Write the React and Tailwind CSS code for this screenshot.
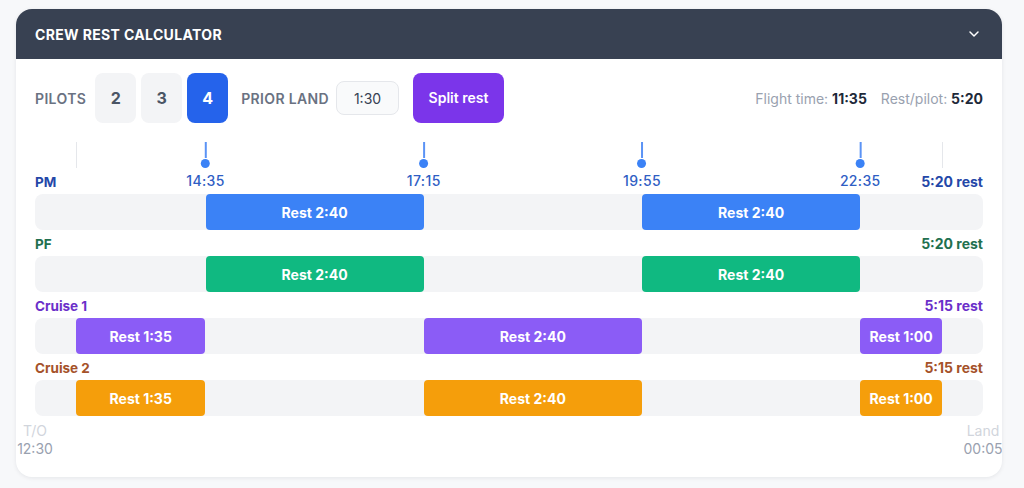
import React, { useState } from "react";
import { ChevronDown } from "lucide-react";

const START = 12 * 60 + 30; // T/O 12:30
const TOTAL = 695; // 11:35

const pct = (min) => `${(min / TOTAL) * 100}%`;

const toMin = (t) => {
  const [h, m] = t.split(":").map(Number);
  let v = h * 60 + m - START;
  if (v < 0) v += 24 * 60;
  return v;
};

const rows = [
  {
    name: "PM",
    total: "5:20 rest",
    label: "text-[#2447a8]",
    bar: "bg-[#3b82f6]",
    rests: [
      ["14:35", "17:15", "Rest 2:40"],
      ["19:55", "22:35", "Rest 2:40"],
    ],
  },
  {
    name: "PF",
    total: "5:20 rest",
    label: "text-[#22704f]",
    bar: "bg-[#10b981]",
    rests: [
      ["14:35", "17:15", "Rest 2:40"],
      ["19:55", "22:35", "Rest 2:40"],
    ],
  },
  {
    name: "Cruise 1",
    total: "5:15 rest",
    label: "text-[#6b2fc9]",
    bar: "bg-[#8b5cf6]",
    rests: [
      ["13:00", "14:35", "Rest 1:35"],
      ["17:15", "19:55", "Rest 2:40"],
      ["22:35", "23:35", "Rest 1:00"],
    ],
  },
  {
    name: "Cruise 2",
    total: "5:15 rest",
    label: "text-[#a5522a]",
    bar: "bg-[#f59e0b]",
    rests: [
      ["13:00", "14:35", "Rest 1:35"],
      ["17:15", "19:55", "Rest 2:40"],
      ["22:35", "23:35", "Rest 1:00"],
    ],
  },
];

const swaps = ["14:35", "17:15", "19:55", "22:35"];

export default function App() {
  const [pilots, setPilots] = useState(4);
  const [prior, setPrior] = useState("1:30");

  return (
    <div
      className="min-h-screen bg-[#f7f8fa] pt-[9px] pl-4"
      style={{ fontFamily: "Inter, 'Liberation Sans', sans-serif" }}
    >
      <div className="w-[986px] rounded-2xl bg-white shadow-[0_1px_4px_rgba(15,23,42,0.08)] overflow-hidden">
        {/* Header */}
        <div className="h-[50px] bg-[#384152] px-[19px] flex items-center justify-between">
          <h2 className="text-[14px] font-bold tracking-wide text-white">CREW REST CALCULATOR</h2>
          <ChevronDown size={16} strokeWidth={2.2} className="text-white mr-[1px]" />
        </div>

        <div className="px-[19px] pt-[14px] pb-[19px]">
          {/* Controls */}
          <div className="flex items-center h-[50px]">
            <span className="text-[14px] font-semibold tracking-wide text-gray-500 mr-[9px]">PILOTS</span>
            <div className="flex gap-[5px]">
              {[2, 3, 4].map((n) => (
                <button
                  key={n}
                  onClick={() => setPilots(n)}
                  className={
                    n === pilots
                      ? "w-[41px] h-[50px] rounded-lg bg-[#2563eb] text-white text-base font-bold"
                      : "w-[41px] h-[50px] rounded-lg bg-gray-100 text-gray-600 text-base font-bold"
                  }
                >
                  {n}
                </button>
              ))}
            </div>
            <span className="ml-[13px] mr-[7px] text-[14px] font-semibold tracking-wide text-gray-500">PRIOR LAND</span>
            <input
              value={prior}
              onChange={(e) => setPrior(e.target.value)}
              className="w-[63px] h-[34px] rounded-lg border border-gray-200 bg-gray-50 text-center text-sm text-gray-700 outline-none"
            />
            <button className="ml-[14px] w-[91px] h-[50px] rounded-lg bg-[#7b35ea] text-white text-sm font-semibold">
              Split rest
            </button>
            <div className="ml-auto flex gap-[14px] text-[14px] text-gray-400">
              <span>
                Flight time: <b className="font-bold text-gray-800">11:35</b>
              </span>
              <span>
                Rest/pilot: <b className="font-bold text-gray-800">5:20</b>
              </span>
            </div>
          </div>

          {/* Time axis */}
          <div className="relative h-[32px] mt-[19px]">
            {["13:00", "23:35"].map((t) => (
              <div
                key={t}
                className="absolute top-0 w-px h-[26px] bg-gray-200"
                style={{ left: pct(toMin(t)) }}
              />
            ))}
            {swaps.map((t) => (
              <div
                key={t}
                className="absolute top-0 flex flex-col items-center -translate-x-1/2"
                style={{ left: pct(toMin(t)) }}
              >
                <div className="w-[2px] h-[16px] bg-[#5b93f5]" />
                <div className="w-[9px] h-[9px] mt-[1px] rounded-full bg-[#3b82f6]" />
                <span className="mt-[5px] text-[14px] leading-4 font-medium tracking-wide text-[#2f5ec4]">{t}</span>
              </div>
            ))}
          </div>

          {/* Crew rows */}
          <div className="flex flex-col gap-[6px]">
            {rows.map((r) => (
              <div key={r.name}>
                <div className={`flex justify-between text-[13.5px] leading-4 font-bold mb-[4px] ${r.label}`}>
                  <span>{r.name}</span>
                  <span className="text-[14px]">{r.total}</span>
                </div>
                <div className="relative h-[36px] rounded-lg bg-gray-100">
                  {r.rests.map(([a, b, text]) => (
                    <div
                      key={a}
                      className={`absolute top-0 h-full rounded-[4px] flex items-center justify-center text-[14px] font-bold text-white ${r.bar}`}
                      style={{ left: pct(toMin(a)), width: pct(toMin(b) - toMin(a)) }}
                    >
                      {text}
                    </div>
                  ))}
                </div>
              </div>
            ))}
          </div>

          {/* Ends */}
          <div className="flex justify-between -mx-[19px] mt-[6px] text-[14px] leading-[18px]">
            <div className="flex flex-col items-center w-[38px]">
              <span className="text-gray-300">T/O</span>
              <span className="text-gray-400">12:30</span>
            </div>
            <div className="flex flex-col items-center w-[38px]">
              <span className="text-gray-300">Land</span>
              <span className="text-gray-400">00:05</span>
            </div>
          </div>
        </div>
      </div>
    </div>
  );
}
